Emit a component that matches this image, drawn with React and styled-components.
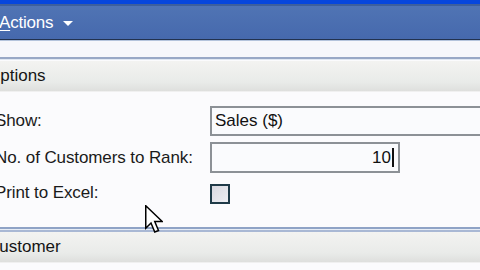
import React from "react"
import styled, { createGlobalStyle } from "styled-components"

const GlobalStyle = createGlobalStyle`
  html, body {
    margin: 0;
    padding: 0;
    background: #fbfbfd;
  }
  body {
    font-family: "Liberation Sans", Arial, sans-serif;
  }
`

const Page = styled.div`
  position: relative;
  width: 480px;
  height: 270px;
  overflow: hidden;
  background: #fbfbfd;
  display: flex;
  flex-direction: column;
`

const TitleEdge = styled.div`
  height: 4px;
  background: #0646dc;
  border-bottom: 2px solid #3d5f9c;
`

const Toolbar = styled.div`
  height: 33px;
  display: flex;
  align-items: center;
  background: linear-gradient(#5074b4, #4669ad);
  border-bottom: 1px solid #22324f;
  box-shadow: 0 1px 0 #b4c4dc;
  margin-bottom: 1px;
`

const Menu = styled.div`
  display: flex;
  align-items: center;
  gap: 10px;
  margin-left: -1px;
  color: #ffffff;
  font-size: 17px;
  letter-spacing: -0.2px;
  u {
    text-decoration-thickness: 1px;
    text-underline-offset: 2px;
  }
`

const Caret = styled.span`
  width: 0;
  height: 0;
  border-left: 5px solid transparent;
  border-right: 5px solid transparent;
  border-top: 5px solid #ffffff;
  margin-top: 2px;
`

const Strip = styled.div`
  height: 16px;
  background: #f6f7fb;
  border-bottom: 2px solid #98a8c6;
  box-shadow: 0 1px 0 #dfe7f2;
  margin-bottom: 2px;
`

const SectionHeader = styled.div`
  height: 30px;
  display: flex;
  align-items: center;
  background: linear-gradient(#f3f3f1, #e9ebe9 70%, #dedfdd);
  border-bottom: 1px solid #f0f0f0;
  color: #151515;
  font-size: 17px;
  span {
    margin-left: ${p => p.$shift}px;
  }
`

const Form = styled.div`
  display: grid;
  grid-template-columns: 215px 1fr;
  align-items: center;
  row-gap: 6px;
  margin: 14px 0 0 -5px;
`

const Label = styled.div`
  color: #1a1a1a;
  font-size: 17px;
  letter-spacing: -0.1px;
  height: ${p => p.$h}px;
  display: flex;
  align-items: center;
`

const Field = styled.div`
  box-sizing: border-box;
  height: ${p => p.$h}px;
  width: ${p => p.$w};
  border: 2px solid #8c9196;
  background: #fafbfd;
  display: flex;
  align-items: center;
  justify-content: ${p => (p.$right ? "flex-end" : "flex-start")};
  padding: 0 4px 0 3px;
  color: #111;
  font-size: 17px;
`

const TextCaret = styled.span`
  width: 2px;
  height: 19px;
  background: #111;
  margin-left: 1px;
`

const Check = styled.div`
  box-sizing: border-box;
  width: 20px;
  height: 20px;
  border: 2px solid #1f3a48;
  background: linear-gradient(135deg, #d8d8e0, #eeeef3);
  margin-top: 1px;
`

const Divider = styled.div`
  margin-top: 20px;
  height: 1px;
  border-top: 2px solid #8fa3c6;
  border-bottom: 2px solid #a9b8d4;
  background: #e6ecf5;
`

const Pointer = styled.svg`
  position: absolute;
  left: 145px;
  top: 205px;
`

export default function App() {
  return (
    <Page>
      <GlobalStyle />
      <TitleEdge />
      <Toolbar>
        <Menu>
          <span>
            <u>A</u>ctions
          </span>
          <Caret />
        </Menu>
      </Toolbar>
      <Strip />
      <SectionHeader $shift={-13}>
        <span>Options</span>
      </SectionHeader>
      <Form>
        <Label $h={30}>Show:</Label>
        <Field $h={30} $w="280px">
          Sales ($)
        </Field>
        <Label $h={31}>No. of Customers to Rank:</Label>
        <Field $h={31} $w="190px" $right>
          10
          <TextCaret />
        </Field>
        <Label $h={28}>Print to Excel:</Label>
        <div>
          <Check />
        </div>
      </Form>
      <Divider />
      <SectionHeader $shift={-13}>
        <span>Customer</span>
      </SectionHeader>
      <Pointer width="18" height="30" viewBox="0 0 12 20">
        <path
          d="M0.5 0.5 L0.5 15.5 L4 12 L6.5 18 L9 17 L6.5 11 L11.5 11 Z"
          fill="#ffffff"
          stroke="#000000"
          strokeWidth="1"
          strokeLinejoin="miter"
        />
      </Pointer>
    </Page>
  )
}
